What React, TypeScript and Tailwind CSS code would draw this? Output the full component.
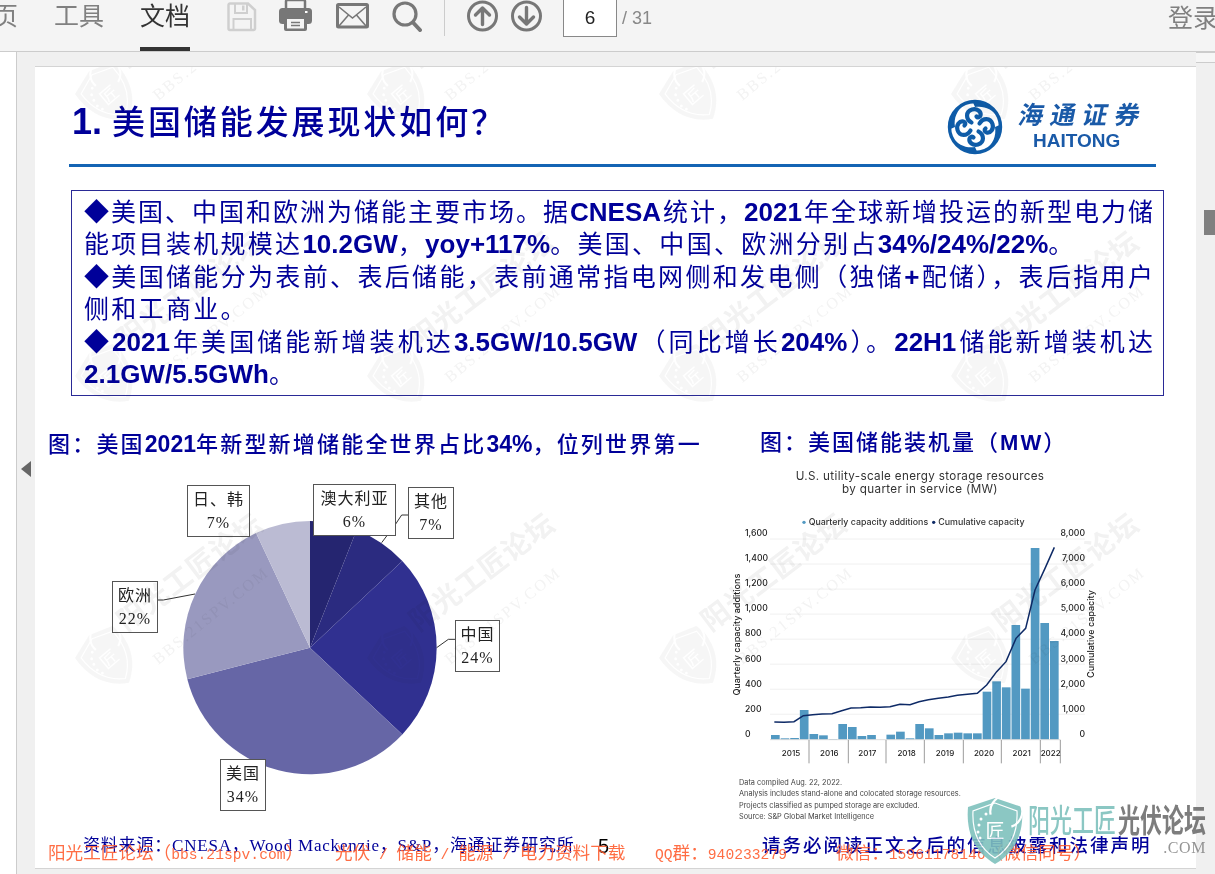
import React from "react";

// full-width CJK punctuation
const COMMA = "\uFF0C";
const COLON = "\uFF1A";
const LP = "\uFF08";
const RP = "\uFF09";
const QM = "\uFF1F";

const pieSlices = [
  { value: 6, color: "#252570" },
  { value: 7, color: "#2b2b80" },
  { value: 24, color: "#303090" },
  { value: 34, color: "#6666a6" },
  { value: 22, color: "#9999bf" },
  { value: 7, color: "#bbbbd3" },
];

// bar tops and line points, measured in 3x chart units
const barTops = [825, 835, 834, 750, 822, 826, 837, 792, 801, 828, 825, 838, 824, 815, 835, 792, 805, 825, 820, 818, 820, 820, 695, 664, 682, 495, 686, 264, 489, 543];
const linePoints = "163,786 192,787 222,785 250,767 278,764 306,762 336,761 365,752 393,744 422,743 451,741 480,742 510,740 540,733 570,734 597,725 625,719 655,715 685,711 712,706 742,703 772,700 800,675 830,635 858,605 888,535 917,505 945,390 975,325 1003,262";
const leftTicks = ["1,600", "1,400", "1,200", "1,000", "800", "600", "400", "200", "0"];
const rightTicks = ["8,000", "7,000", "6,000", "5,000", "4,000", "3,000", "2,000", "1,000", "0"];
const years = [
  { label: "2015", x: 213 },
  { label: "2016", x: 328 },
  { label: "2017", x: 442 },
  { label: "2018", x: 560 },
  { label: "2019", x: 675 },
  { label: "2020", x: 792 },
  { label: "2021", x: 905 },
  { label: "2022", x: 992 },
];

function SaveIcon() {
  return (
    <svg width="30" height="31" viewBox="0 0 30 31" className="mt-[1px] ml-[37px] shrink-0" fill="none" stroke="#cfcfcf" strokeWidth="2.5">
      <path d="M3 2.5H21L28 9V27.5a1.5 1.5 0 0 1-1.5 1.5H3a1.5 1.5 0 0 1-1.5-1.5V4A1.5 1.5 0 0 1 3 2.5Z" />
      <path d="M8 3V12H20V3" strokeWidth="2" />
      <rect x="15" y="4.5" width="2.5" height="5" fill="#cfcfcf" stroke="none" />
      <path d="M6.5 28V18H24V28" strokeWidth="2" />
    </svg>
  );
}

function PrinterIcon() {
  return (
    <svg width="33" height="31" viewBox="0 0 33 31" className="ml-[22px] shrink-0">
      <path d="M7 9V1.5a1.5 1.5 0 0 1 1.5-1.5H24.5A1.5 1.5 0 0 1 26 1.5V9" fill="none" stroke="#777" strokeWidth="2.5" />
      <rect x="0" y="8" width="33" height="16" rx="3.5" fill="#777" />
      <rect x="26" y="11" width="2.5" height="2" fill="#fff" />
      <rect x="5" y="17" width="23" height="14" rx="2" fill="#777" />
      <rect x="8" y="19" width="17" height="9.5" fill="#f4f4f4" />
      <path d="M12 22.5H21M12 25.5H21" stroke="#777" strokeWidth="1.5" />
    </svg>
  );
}

function MailIcon() {
  return (
    <svg width="33" height="26" viewBox="0 0 33 26" className="mt-[3px] ml-[24px] shrink-0" fill="none" stroke="#777">
      <rect x="1.5" y="1.5" width="30" height="22.5" rx="1" strokeWidth="3" />
      <path d="M3 4L16.5 15L30 4M3 23L12.5 12M30 23L20.5 12" strokeWidth="1.6" />
    </svg>
  );
}

function SearchIcon() {
  return (
    <svg width="30" height="31" viewBox="0 0 30 31" className="mt-[1px] ml-[23px] shrink-0" fill="none" stroke="#777" strokeLinecap="round">
      <circle cx="13" cy="13" r="11" strokeWidth="3.2" />
      <path d="M21 21.5L28 29" strokeWidth="4" />
    </svg>
  );
}

function ArrowCircle({ down, className }: { down?: boolean; className: string }) {
  return (
    <svg width="31" height="32" viewBox="0 0 31 32" className={className} fill="none" stroke="#777" strokeLinecap="round" strokeLinejoin="round">
      <circle cx="15.5" cy="16" r="14" strokeWidth="3" />
      {down ? <path d="M15.5 7.5V23.5M8.5 17L15.5 24L22.5 17" strokeWidth="3.4" /> : <path d="M15.5 24.5V8.5M8.5 15L15.5 8L22.5 15" strokeWidth="3.4" />}
    </svg>
  );
}

function Toolbar() {
  return (
    <header className="flex h-[52px] shrink-0 items-start overflow-hidden border-b border-[#cccccc] bg-[#f4f4f4]">
      <span className="-ml-[7px] shrink-0 text-[25px] leading-[32px] text-[#808080]">页</span>
      <span className="ml-[36px] shrink-0 text-[25px] leading-[32px] text-[#808080]">工具</span>
      <span className="ml-[36px] h-[51px] w-[50px] shrink-0 border-b-4 border-[#333333] text-[25px] leading-[32px] text-[#333333]">文档</span>
      <SaveIcon />
      <PrinterIcon />
      <MailIcon />
      <SearchIcon />
      <div className="ml-[22px] h-[36px] w-px shrink-0 bg-[#cccccc]" />
      <ArrowCircle className="ml-[22px] shrink-0" />
      <ArrowCircle down className="ml-[13px] shrink-0" />
      <div className="-mt-px ml-[21px] flex h-[38px] w-[54px] shrink-0 items-center justify-center border border-[#888888] bg-white text-[19px] text-[#222222]">6</div>
      <span className="ml-[5px] shrink-0 text-[18px] leading-[36px] text-[#888888]">/ 31</span>
      <span className="-mr-[3px] ml-auto shrink-0 text-[25px] leading-[36px] text-[#808080]">登录</span>
    </header>
  );
}

function HaitongMark() {
  const arm = (
    <g>
      <path d="M-3.5 -4.5C-9.5 -8 -9.5 -15.5 -3 -17.5C2 -19 6.5 -15.5 5.5 -11.5C5 -9.5 2.5 -9 1.5 -10.5" fill="none" stroke="#0f5ca8" strokeWidth="4.2" strokeLinecap="round" />
      <path d="M-2 -24.5C8 -26 19 -21 23 -10C17 -18 9 -21.5 0 -20Z" fill="#0f5ca8" />
    </g>
  );
  return (
    <svg width="56" height="56" viewBox="-28 -28 56 56" className="shrink-0">
      <circle r="25.5" fill="none" stroke="#0f5ca8" strokeWidth="3.4" />
      {arm}
      <g transform="rotate(90)">{arm}</g>
      <g transform="rotate(180)">{arm}</g>
      <g transform="rotate(270)">{arm}</g>
    </svg>
  );
}

function Shield({ fill, ring }: { fill: string; ring: string }) {
  return (
    <svg viewBox="0 0 60 68" className="h-full w-full">
      <path d="M30 1L57 10C59 34 52 54 30 67C8 54 1 34 3 10Z" fill={fill} />
      <path d="M30 6L52 14C53 34 47 50 30 61C13 50 7 34 8 14Z" fill="none" stroke={ring} strokeWidth="1.2" />
      <path d="M42 22A16 16 0 1 1 42 46" fill="none" stroke={ring} strokeWidth="2.2" transform="rotate(-60 30 34)" />
      <circle cx="14" cy="28" r="1.5" fill={ring} />
      <circle cx="16" cy="22" r="1.5" fill={ring} />
      <circle cx="21" cy="17" r="1.5" fill={ring} />
      <circle cx="13" cy="35" r="1.5" fill={ring} />
      <circle cx="15" cy="41" r="1.5" fill={ring} />
      <text x="30" y="41" textAnchor="middle" fontSize="19" fill={ring} fontFamily="'Noto Sans CJK SC',sans-serif">匠</text>
    </svg>
  );
}

function WatermarkTile() {
  return (
    <div className="relative">
      <div className="absolute top-0 left-0 h-[64px] w-[60px] -rotate-[40deg] opacity-60">
        <Shield fill="#f1f1f1" ring="#ffffff" />
      </div>
      <span className="absolute top-[-16px] left-[42px] origin-left -rotate-[37deg] text-[28px] leading-none font-bold tracking-[1px] whitespace-nowrap text-[#f2f2f2]">阳光工匠论坛</span>
      <span className="absolute top-[26px] left-[76px] origin-left -rotate-[39deg] [font-family:'Liberation_Serif',serif] text-[16px] leading-none tracking-[2px] whitespace-nowrap text-[#f3f3f3]">BBS.21SPV.COM</span>
    </div>
  );
}

function Watermarks() {
  return (
    <div className="pointer-events-none absolute top-[-4px] left-[44px] grid grid-cols-[repeat(4,292px)] grid-rows-[repeat(3,282px)] mix-blend-multiply">
      {Array.from({ length: 12 }, (_, i) => (
        <WatermarkTile key={i} />
      ))}
    </div>
  );
}

function B({ children }: { children: React.ReactNode }) {
  return <span className="text-[26px] font-bold tracking-normal">{children}</span>;
}

function Bullets() {
  const justified = "[text-align-last:justify] [text-align:justify] w-[1069px]";
  return (
    <div className="mt-[23px] ml-[36px] h-[206px] w-[1093px] border border-[#2a2a96] pt-[5px] pl-[12px] text-[25px] leading-[32.4px] whitespace-nowrap text-[#000099]">
      <div className={justified}>◆美国、中国和欧洲为储能主要市场。据<B>CNESA</B>统计{COMMA}<B>2021</B>年全球新增投运的新型电力储</div>
      <div className="tracking-[2.3px]">能项目装机规模达<B>10.2GW</B>{COMMA}<B>yoy+117%</B>。美国、中国、欧洲分别占<B>34%/24%/22%</B>。</div>
      <div className={justified}>◆美国储能分为表前、表后储能{COMMA}表前通常指电网侧和发电侧{LP}独储<B>+</B>配储{RP}{COMMA}表后指用户</div>
      <div className="tracking-[2.3px]">侧和工商业。</div>
      <div className={justified}>◆<B>2021</B>年美国储能新增装机达<B>3.5GW/10.5GW</B>{LP}同比增长<B>204%</B>{RP}。<B>22H1</B>储能新增装机达</div>
      <div><B>2.1GW/5.5GWh</B>。</div>
    </div>
  );
}

function Callout({ name, pct, className }: { name: string; pct: string; className: string }) {
  return (
    <div className={`absolute flex h-[52px] flex-col items-center justify-center border border-[#555555] bg-white text-[16px] leading-[23px] tracking-[1px] text-[#222222] ${className}`}>
      <span className="whitespace-nowrap">{name}</span>
      <span className="[font-family:'Liberation_Serif',serif]">{pct}</span>
    </div>
  );
}

function PieChart() {
  const cx = 630;
  const cy = 533;
  const r = 380;
  let acc = 0;
  const paths = pieSlices.map((s) => {
    const a0 = (acc / 100) * 2 * Math.PI;
    acc += s.value;
    const a1 = (acc / 100) * 2 * Math.PI;
    const large = s.value > 50 ? 1 : 0;
    const d = `M${cx} ${cy}L${cx + r * Math.sin(a0)} ${cy - r * Math.cos(a0)}A${r} ${r} 0 ${large} 1 ${cx + r * Math.sin(a1)} ${cy - r * Math.cos(a1)}Z`;
    return <path key={s.color} d={d} fill={s.color} />;
  });
  return (
    <div className="relative h-[370px] pt-[10px]">
      <svg width="420" height="350" viewBox="0 0 1260 1050" className="ml-[65px]">
        {paths}
        <path d="M845 218L885 165L905 135H925M1010 533L1045 508H1066M170 390H190L285 372" fill="none" stroke="#333" strokeWidth="3" />
      </svg>
      <Callout name="日、韩" pct="7%" className="top-[25px] left-[152px] w-[63px]" />
      <Callout name="澳大利亚" pct="6%" className="top-[24px] left-[278px] w-[83px]" />
      <Callout name="其他" pct="7%" className="top-[27px] left-[373px] w-[46px]" />
      <Callout name="中国" pct="24%" className="top-[160px] left-[420px] w-[45px]" />
      <Callout name="欧洲" pct="22%" className="top-[121px] left-[77px] w-[46px]" />
      <Callout name="美国" pct="34%" className="top-[299px] left-[185px] w-[46px]" />
    </div>
  );
}

function StorageChart() {
  return (
    <svg width="380" height="370" viewBox="0 0 1140 1110" className="block [font-family:Inter,sans-serif]">
      <text x="600" y="60" textAnchor="middle" fontSize="35" letterSpacing="1" fill="#333">U.S. utility-scale energy storage resources</text>
      <text x="600" y="98" textAnchor="middle" fontSize="35" letterSpacing="1" fill="#333">by quarter in service (MW)</text>
      <circle cx="252" cy="187" r="5" fill="#5299c2" />
      <text x="266" y="195" fontSize="26.5" fontWeight="500" fill="#333">Quarterly capacity additions</text>
      <circle cx="641" cy="187" r="5" fill="#0e2a66" />
      <text x="655" y="195" fontSize="26.5" fontWeight="500" fill="#333">Cumulative capacity</text>
      {leftTicks.slice(0, 8).map((_, i) => (
        <line key={i} x1="150" x2="1095" y1={237 + i * 75.1} y2={237 + i * 75.1} stroke="#f0f0f0" strokeWidth="3" />
      ))}
      {leftTicks.map((t, i) => (
        <text key={t} x="75" y={227 + i * 75.5} fontSize="26" fontWeight="500" fill="#222">{t}</text>
      ))}
      {rightTicks.map((t, i) => (
        <text key={t} x="1095" y={227 + i * 75.5} textAnchor="end" fontSize="26" fontWeight="500" fill="#222">{t}</text>
      ))}
      <text transform="translate(60 524) rotate(-90)" textAnchor="middle" fontSize="27" fontWeight="500" fill="#222">Quarterly capacity additions</text>
      <text transform="translate(1123 522) rotate(-90)" textAnchor="middle" fontSize="27" fontWeight="500" fill="#222">Cumulative capacity</text>
      {barTops.map((top, i) => (
        <rect key={i} x={153 + i * 28.86} y={top} width="26" height={838 - top} fill="#5299c2" />
      ))}
      <line x1="150" x2="1022" y1="839" y2="839" stroke="#cccccc" strokeWidth="2" />
      <polyline points={linePoints} fill="none" stroke="#0e2a66" strokeWidth="4.5" />
      {[267, 385, 498, 613, 730, 844, 961, 1021].map((x) => (
        <line key={x} x1={x} x2={x} y1="840" y2="910" stroke="#888" strokeWidth="2.5" />
      ))}
      {years.map((y) => (
        <text key={y.label} x={y.x} y="887" textAnchor="middle" fontSize="24" fontWeight="500" fill="#222">{y.label}</text>
      ))}
      <text x="57" y="975" fontSize="22" fill="#444">Data compiled Aug. 22, 2022.</text>
      <text x="57" y="1008" fontSize="22" fill="#444">Analysis includes stand-alone and colocated storage resources.</text>
      <text x="57" y="1043" fontSize="22" fill="#444">Projects classified as pumped storage are excluded.</text>
      <text x="57" y="1076" fontSize="22" fill="#444">Source: S&amp;P Global Market Intelligence</text>
    </svg>
  );
}

function SlidePage() {
  return (
    <article className="relative h-[803px] w-[1161px] shrink-0 overflow-hidden border-y border-[#d4d4d4] bg-white">
      <div className="flex h-[97px] items-start">
        <h1 className="mt-[35px] ml-[37px] text-[33px] leading-[40px] font-medium tracking-[2.9px] whitespace-nowrap text-[#000099]">
          <span className="text-[36px] font-bold tracking-normal">1. </span>美国储能发展现状如何{QM}
        </h1>
        <div className="mt-[32px] ml-auto flex shrink-0 items-start">
          <HaitongMark />
          <div className="ml-[16px] flex w-[125px] flex-col items-start">
            <span className="origin-left -skew-x-12 text-[25px] leading-[32px] font-bold tracking-[7px] whitespace-nowrap text-[#1a5aa8]">海通证券</span>
            <span className="ml-[14px] text-[19px] leading-[20px] font-bold text-[#1a5aa8]">HAITONG</span>
          </div>
          <div className="w-[52px]" />
        </div>
      </div>
      <div className="ml-[34px] h-[3px] w-[1087px] bg-[#1464b4]" />
      <Bullets />

      <div className="mt-[32px] flex h-[402px]">
        <section className="w-[685px] shrink-0">
          <h2 className="ml-[13px] h-[32px] text-[22px] leading-[32px] font-medium tracking-[2.2px] whitespace-nowrap text-[#000099]">
            图{COLON}美国<span className="text-[23px] font-bold tracking-normal">2021</span>年新型新增储能全世界占比<span className="text-[23px] font-bold tracking-normal">34%</span>{COMMA}位列世界第一
          </h2>
          <PieChart />
        </section>
        <section className="flex-1">
          <h2 className="ml-[40px] h-[32px] text-[22px] leading-[30px] font-medium tracking-[2px] whitespace-nowrap text-[#000099]">
            图{COLON}美国储能装机量{LP}<span className="font-bold">MW</span>{RP}
          </h2>
          <StorageChart />
        </section>
      </div>

      <footer className="flex h-[32px] items-center whitespace-nowrap">
        <span className="ml-[48px] w-[515px] [font-family:'Liberation_Serif','Noto_Sans_CJK_SC',serif] text-[17px] tracking-[0.8px] text-[#000099]">资料来源{COLON}CNESA{COMMA}Wood Mackenzie{COMMA}S&amp;P{COMMA}海通证券研究所</span>
        <span className="w-[164px] text-[20px] text-black">5</span>
        <span className="text-[18.5px] font-medium tracking-[2px] text-[#000099]">请务必阅读正文之后的信息披露和法律声明</span>
      </footer>

      <Watermarks />
    </article>
  );
}

function Mono({ children }: { children: React.ReactNode }) {
  return <span className="[font-family:'Liberation_Mono',monospace] text-[14.67px] whitespace-pre">{children}</span>;
}

function PromoOverlay() {
  return (
    <>
      <div className="pointer-events-none absolute top-[842px] left-[48px] flex h-[24px] items-center text-[17.6px] leading-[24px] whitespace-nowrap text-[#ff5e30] opacity-90">
        <span className="w-[287px]">阳光工匠论坛{LP}<Mono>bbs.21spv.com</Mono>{RP}</span>
        <span className="w-[320px]">光伏<Mono> / </Mono>储能<Mono> / </Mono>能源<Mono> / </Mono>电力资料下载</span>
        <span className="w-[181px]"><Mono>QQ</Mono>群{COLON}<Mono>940233279</Mono></span>
        <span>微信{COLON}<Mono>15961178146</Mono>{LP}微信同号{RP}</span>
      </div>
      <div className="pointer-events-none absolute top-[797px] left-[965px] flex items-start opacity-90">
        <div className="h-[68px] w-[60px]">
          <Shield fill="#7fc1bd" ring="#ffffff" />
        </div>
        <div className="mt-[7px] ml-[3px] flex flex-col">
          <div className="scale-y-[1.45] text-[22px] leading-[36px] font-medium whitespace-nowrap">
            <span className="text-[#7fc1bd]">阳光工匠</span>
            <span className="ml-[2px] font-bold text-[#6f6f6f]">光伏论坛</span>
          </div>
          <span className="self-end [font-family:'Liberation_Serif',serif] text-[16px] leading-[16px] tracking-[0.6px] text-[#8a8a8a]">.COM</span>
        </div>
      </div>
    </>
  );
}

export default function App() {
  return (
    <div className="relative flex h-screen w-full flex-col overflow-hidden bg-[#f0f0f0] [font-family:'Liberation_Sans','Noto_Sans_CJK_SC',sans-serif]">
      <Toolbar />
      <div className="relative flex min-h-0 flex-1">
        <aside className="w-[17px] shrink-0 border-r border-[#cccccc] bg-white" />
        <div className="absolute top-[409px] left-[21px] h-0 w-0 border-y-[8px] border-r-[10px] border-y-transparent border-r-[#666666]" />
        <main className="flex-1 pt-[14px] pl-[18px]">
          <SlidePage />
        </main>
        <div className="w-[20px] shrink-0 bg-[#f0f0f0]">
          <div className="h-[11px] border-y border-[#cccccc] bg-[#f6f6f6]" />
          <div className="mt-[147px] ml-[8px] h-[25px] w-[12px] bg-[#808080]" />
        </div>
      </div>
      <PromoOverlay />
    </div>
  );
}
